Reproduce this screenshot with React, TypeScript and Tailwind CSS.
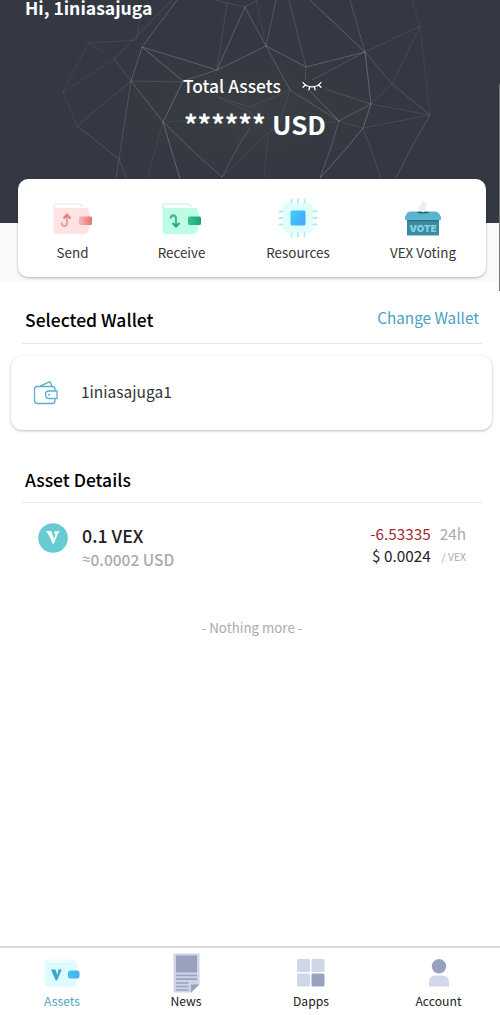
import type { ReactNode } from "react";

const quickActions = [
  { id: "send", label: "Send", icon: <SendIcon />, className: "w-[109px]" },
  { id: "receive", label: "Receive", icon: <ReceiveIcon />, className: "w-[109px]" },
  { id: "resources", label: "Resources", icon: <ResourcesIcon />, className: "w-[124px]" },
  { id: "voting", label: "VEX Voting", icon: <VoteIcon />, className: "w-[126px]" },
];

const tabs = [
  { id: "assets", label: "Assets", icon: <AssetsIcon />, className: "w-[124px]" },
  { id: "news", label: "News", icon: <NewsIcon />, className: "w-[124px]" },
  { id: "dapps", label: "Dapps", icon: <DappsIcon />, className: "w-[126px]" },
  { id: "account", label: "Account", icon: <AccountIcon />, className: "w-[126px] pl-[3px]" },
];

// Mesh behind the balance, one polyline per entry
const meshLines = [
  { points: "177,0 142,47 131,81 163,122 193,151 222,177", o: 0.28 },
  { points: "172,0 114,59 131,81 182,82", o: 0.17 },
  { points: "142,47 183,81 163,122 180,179", o: 0.34 },
  { points: "142,47 217,70 266,46 306,67 365,52", o: 0.3 },
  { points: "217,70 245,7 250,17 266,46 290,90 339,121", o: 0.28 },
  { points: "183,81 217,70", o: 0.28 },
  { points: "217,70 227,3 245,7", o: 0.16 },
  { points: "215,0 227,3", o: 0.16 },
  { points: "245,7 258,0", o: 0.18 },
  { points: "266,46 276,0", o: 0.24 },
  { points: "256,0 266,46", o: 0.1 },
  { points: "289,0 306,67 305,80", o: 0.2 },
  { points: "310,91 339,121", o: 0.32 },
  { points: "310,0 365,52 371,104 363,128 345,150 320,178", o: 0.34 },
  { points: "339,121 371,104", o: 0.26 },
  { points: "350,0 365,52 392,84 430,115 410,150 396,178", o: 0.22 },
  { points: "365,52 420,26 392,84 371,104 430,115 363,128 339,121", o: 0.13 },
  { points: "412,0 420,26 430,115", o: 0.09 },
  { points: "365,52 312,80", o: 0.2 },
  { points: "325,89 371,104", o: 0.2 },
  { points: "339,121 330,150 320,178", o: 0.26 },
  { points: "363,128 371,150 381,178", o: 0.17 },
  { points: "222,177 250,150 280,122 290,90 250,107 217,97", o: 0.13 },
  { points: "217,97 250,112 268,135 264,178", o: 0.1 },
  { points: "339,121 300,127", o: 0.1 },
  { points: "88,43 136,40 142,10", o: 0.12 },
  { points: "88,43 105,53", o: 0.1 },
  { points: "88,43 63,92 114,59", o: 0.1 },
  { points: "63,92 77,126", o: 0.1 },
  { points: "63,92 131,81", o: 0.04 },
  { points: "77,126 131,81", o: 0.16 },
  { points: "77,126 119,159 126,178", o: 0.19 },
  { points: "131,81 119,159 116,178", o: 0.2 },
  { points: "163,122 155,150 147,178", o: 0.1 },
  { points: "163,122 200,120", o: 0.08 },
  { points: "222,177 240,143 250,128", o: 0.22 },
];

function MeshBackground() {
  return (
    <svg className="absolute inset-0" width="500" height="223" viewBox="0 0 500 223" fill="none">
      <defs>
        <radialGradient id="mesh-glow" cx="0.49" cy="0.5" r="0.28">
          <stop offset="0" stopColor="#393f43" />
          <stop offset="1" stopColor="#393f43" stopOpacity="0" />
        </radialGradient>
      </defs>
      <rect width="500" height="223" fill="url(#mesh-glow)" />
      {meshLines.map((l) => (
        <polyline key={l.points} points={l.points} stroke="#c3c9d2" strokeWidth="0.9" strokeOpacity={l.o} />
      ))}
    </svg>
  );
}

function ClosedEyeIcon() {
  return (
    <svg width="20" height="11" viewBox="0 0 20 11" fill="none" stroke="#fff" strokeWidth="1.3" strokeLinecap="round">
      <path d="M1 1.5C5 7.2 15 7.2 19 1.5" />
      <path d="M3.4 4 1 6.2M7.7 5.8 6.9 8.8M12.3 5.8 13.1 8.8M16.6 4 19 6.2" />
    </svg>
  );
}

function SendIcon() {
  return (
    <svg width="40" height="34" viewBox="0 0 40 34" fill="none">
      <defs>
        <linearGradient id="send-clasp" x1="0" x2="1">
          <stop offset="0" stopColor="#f7b9b8" />
          <stop offset="1" stopColor="#e97272" />
        </linearGradient>
      </defs>
      <path d="M1 7V5.5Q1 3 3.5 3H26Q28.5 3 29 6" stroke="#fbe6e6" strokeWidth="1.5" />
      <path d="M0.5 5Q1 7 4 7H33Q35.5 7 36 10L37 14V23L35 31Q34 33 31 33H4Q0.5 33 0.5 29.5Z" fill="#fde3e3" />
      <rect x="26" y="15.5" width="13" height="8.5" rx="1.5" fill="url(#send-clasp)" />
      <path d="M9 21.5Q8.5 25 11.5 25Q14 25 14 21.5V15" stroke="#eda19f" strokeWidth="2" />
      <path d="M10.5 17.5 14 13.7 17.5 17.5" stroke="#e58381" strokeWidth="2.2" />
    </svg>
  );
}

function ReceiveIcon() {
  return (
    <svg width="40" height="34" viewBox="0 0 40 34" fill="none">
      <defs>
        <linearGradient id="receive-clasp" x1="0" x2="1">
          <stop offset="0" stopColor="#39c28b" />
          <stop offset="1" stopColor="#1da377" />
        </linearGradient>
      </defs>
      <path d="M1 7V5.5Q1 3 3.5 3H26Q28.5 3 29 6" stroke="#c8fbe8" strokeWidth="1.5" />
      <path d="M0.5 5Q1 7 4 7H33Q35.5 7 36 10L37 14V23L35 31Q34 33 31 33H4Q0.5 33 0.5 29.5Z" fill="#bdfde5" />
      <rect x="26" y="15.5" width="13" height="8.5" rx="1.5" fill="url(#receive-clasp)" />
      <path d="M8.7 17.5Q9 14.3 11.5 14.3Q14 14.3 14 18V24.5" stroke="#45b894" strokeWidth="2.2" />
      <path d="M10.5 22 14 25.5 17.5 22" stroke="#2eaa83" strokeWidth="2.2" />
    </svg>
  );
}

function ResourcesIcon() {
  return (
    <svg width="40" height="40" viewBox="0 0 40 40" fill="none">
      <defs>
        <linearGradient id="chip-core" x1="0" y1="0" x2="1" y2="0.6">
          <stop offset="0" stopColor="#36d3f8" />
          <stop offset="1" stopColor="#4ba9fb" />
        </linearGradient>
      </defs>
      <rect x="5" y="5" width="30" height="30" rx="5" fill="#e0fcfb" />
      <path
        d="M13.5 1.5V4.5M20 1.5V4.5M26.5 1.5V4.5M13.5 35.5V38.5M20 35.5V38.5M26.5 35.5V38.5M1.5 13.5H4.5M1.5 20H4.5M1.5 26.5H4.5M35.5 13.5H38.5M35.5 20H38.5M35.5 26.5H38.5"
        stroke="#a9efe8"
        strokeWidth="1.8"
        strokeLinecap="round"
      />
      <rect x="12.5" y="12.5" width="15" height="15" rx="1.5" fill="url(#chip-core)" />
    </svg>
  );
}

function VoteIcon() {
  return (
    <svg width="38" height="36" viewBox="0 0 38 36">
      <path d="M6 11.5H31Q34 11.5 35.5 14L37 17V20H1V17L2.5 14Q3.5 11.5 6 11.5Z" fill="#59b5cb" />
      <path d="M12 12.5Q19 10.5 26 12.5 19 14.5 12 12.5Z" fill="#25606f" />
      <path d="M18.5 1 23 3 20 12.5 14 10Z" fill="#f0eded" />
      <path d="M3 20H35V35.5H3Z" fill="#398ca4" />
      <path d="M3 20H35V21.5H3Z" fill="#2c7489" />
      <text
        x="19"
        y="31.7"
        textAnchor="middle"
        textLength="27"
        fill="#85d2e3"
        fontSize="9.5"
        fontWeight="900"
        fontFamily="Inter, sans-serif"
      >
        VOTE
      </text>
    </svg>
  );
}

function WalletIcon() {
  return (
    <svg width="26" height="26" viewBox="0 0 26 26" fill="none" stroke="#5ab0cd" strokeWidth="1.3" strokeLinejoin="round">
      <path d="M22 11V9Q22 6.5 19.5 6.5H4Q1.5 6.5 1.5 9V20.5Q1.5 23.5 4.5 23.5H19Q22 23.5 22 20.5V18.5" />
      <path d="M7 6.2 17 1.7 19 6.2" />
      <path d="M24 11H16Q12.5 11 12.5 14.7T16 18.5H24Z" />
      <circle cx="16.2" cy="14.7" r="1" fill="#5ab0cd" stroke="none" />
    </svg>
  );
}

function VexLogo() {
  return (
    <svg width="30" height="30" viewBox="0 0 30 30">
      <circle cx="15" cy="15" r="14.8" fill="#66cbd3" />
      <path d="M7.5 8H13.2L16 15.5 14.8 20.5 9.8 10.3Q9 8.7 7.5 8Z" fill="#fff" />
      <path d="M17 8.3H22.2Q20.7 9 19.8 11L15.3 21.8 14.6 20 17 13.5Q18 10.5 15.8 10Z" fill="#fff" />
    </svg>
  );
}

function AssetsIcon() {
  return (
    <svg width="36" height="30" viewBox="0 0 36 30" fill="none">
      <defs>
        <linearGradient id="assets-clasp" x1="0" x2="1">
          <stop offset="0" stopColor="#36c9f0" />
          <stop offset="1" stopColor="#4fa9ef" />
        </linearGradient>
      </defs>
      <path d="M4 1.5H26Q31 1.5 33 6V24Q32 28.5 29 28.5H4Q1 28.5 1 25.5V4.5Q1 1.5 4 1.5Z" fill="#dcfcff" />
      <path d="M2 6Q2 2.5 5 2.5H26L29 4.5H6Q3 4.5 2 6Z" fill="#f1fffe" />
      <path d="M7 11.5H11.5L13.3 17 14.5 11.5H17.8L13 22.5H11.7Z" fill="#34a9d0" />
      <rect x="24" y="12.5" width="11.5" height="8" rx="2.5" fill="url(#assets-clasp)" />
    </svg>
  );
}

function NewsIcon() {
  return (
    <svg width="27" height="40" viewBox="0 0 27 40">
      <path d="M0.5 0.5H26.5V31L18.5 39.5H0.5Z" fill="#ced4e8" />
      <path d="M3 2.5H24V19.5H3Z" fill="#98a1bd" />
      <path d="M3 22.5H24M3 26.2H24M3 30H15.5M3 33.5H15.5M3 37H15.5" stroke="#98a1bd" strokeWidth="1.7" />
      <path d="M18 39.5V31.5H26.5Z" fill="#98a1bd" />
    </svg>
  );
}

function DappsIcon() {
  return (
    <svg width="28" height="28" viewBox="0 0 28 28" fill="#d0d5e8">
      <rect width="13" height="13" rx="1.5" />
      <rect x="14.5" width="13" height="13" rx="1.5" />
      <rect y="14.5" width="13" height="13" rx="1.5" />
      <rect x="14.5" y="14.5" width="13" height="13" rx="1.5" fill="#98a2bf" />
    </svg>
  );
}

function AccountIcon() {
  return (
    <svg width="22" height="28" viewBox="0 0 22 28">
      <circle cx="11" cy="7.3" r="7.2" fill="#98a2bf" />
      <path d="M1 27.5V23Q1 16.5 8 16.5H14Q21 16.5 21 23V27.5Z" fill="#d3d7ea" />
    </svg>
  );
}

function SectionHeader({ title, children }: { title: string; children?: ReactNode }) {
  return (
    <div className="mr-[18px] ml-[22px] flex justify-between border-b border-[#e6e6e6] px-[3px]">
      <h2 className="text-[17.5px] leading-[29px] font-medium text-black">{title}</h2>
      {children}
    </div>
  );
}

export default function App() {
  return (
    <div className="relative flex h-[1015px] w-[500px] flex-col overflow-hidden bg-white font-['Noto_Sans_CJK_SC',sans-serif] whitespace-nowrap text-[#333]">
      <header className="relative h-[223px] shrink-0 bg-[#343842] text-white">
        <MeshBackground />
        <div className="relative flex flex-col">
          <p className="pl-[25px] text-[17.6px] leading-[15px] font-bold">Hi, 1iniasajuga</p>
          <div className="mt-[61px] flex h-5 items-center pl-[183px]">
            <span className="text-[17.4px] leading-5 font-medium">Total Assets</span>
            <button type="button" className="ml-[21px]" aria-label="Show balance">
              <ClosedEyeIcon />
            </button>
          </div>
          <p className="mt-3 flex pl-[184px] text-[26px] leading-8 font-bold">
            <span className="w-[88px] text-[26.8px]">******</span>
            <span>USD</span>
          </p>
        </div>
      </header>

      <main className="flex-1">
        <div className="h-[59px] bg-[#fafafa]">
          <div className="relative -top-11 ml-[18px] flex h-[98px] w-[468px] rounded-[10px] bg-white shadow-[0_1px_3px_rgba(0,0,0,0.28)]">
            {quickActions.map((a) => (
              <button key={a.id} type="button" className={`flex flex-col items-center ${a.className}`}>
                <span className="mt-[18px] flex h-[42px] items-center">{a.icon}</span>
                <span className="mt-[3px] text-[13.4px] leading-5">{a.label}</span>
              </button>
            ))}
          </div>
        </div>

        <section className="pt-[23px]">
          <SectionHeader title="Selected Wallet">
            <button type="button" className="h-[38px] pb-[14px] text-[15.3px] leading-6 text-[#4a9fc4]">
              Change Wallet
            </button>
          </SectionHeader>
          <div className="mt-3 ml-[11px] flex h-[74px] w-[481px] items-center rounded-[11px] bg-white pl-[22px] shadow-[0_1px_3px_rgba(0,0,0,0.28)]">
            <WalletIcon />
            <span className="mb-[5px] ml-[22px] text-[15.5px] leading-6">1iniasajuga1</span>
          </div>
        </section>

        <section className="pt-[35px]">
          <SectionHeader title="Asset Details">
            <span className="h-[37px]" />
          </SectionHeader>
          <div className="flex pt-5 pr-[34px] pl-[37.5px]">
            <VexLogo />
            <div className="ml-[14.5px]">
              <p className="text-[17.8px] leading-[25px] font-medium text-[#222]">0.1 VEX</p>
              <p className="flex text-[15.5px] leading-[23px] font-medium text-[#aaa]">
                <span className="w-[8.5px] font-[Roboto] text-[15px] font-normal">≈</span>
                <span>0.0002 USD</span>
              </p>
            </div>
            <div className="-mt-px ml-auto grid grid-cols-[auto_auto] content-start gap-x-[9px] text-[15.3px] leading-[22px]">
              <span className="text-right text-[#a02a30]">-6.53335</span>
              <span className="text-[#aaa]">24h</span>
              <span className="text-right text-[#222]">$ 0.0024</span>
              <span className="pt-[2px] text-right text-[10.4px] text-[#aaa]">/ VEX</span>
            </div>
          </div>
          <p className="mt-[47px] pl-1 text-center text-[13.3px] leading-5 text-[#aaa]">- Nothing more -</p>
        </section>
      </main>

      <nav className="flex h-[69px] shrink-0 border-t-2 border-[#d9d9d9]">
        {tabs.map((t) => (
          <button key={t.id} type="button" className={`flex flex-col items-center ${t.className}`}>
            <span className="mt-[5px] flex h-10 items-center">{t.icon}</span>
            <span className={`text-[12.2px] leading-4 ${t.id === "assets" ? "text-[#56a8c6]" : "text-[#222]"}`}>
              {t.label}
            </span>
          </button>
        ))}
      </nav>

      {/* scroll indicator */}
      <div className="absolute top-[84px] right-0 h-[207px] w-px bg-[#777]" />
    </div>
  );
}
